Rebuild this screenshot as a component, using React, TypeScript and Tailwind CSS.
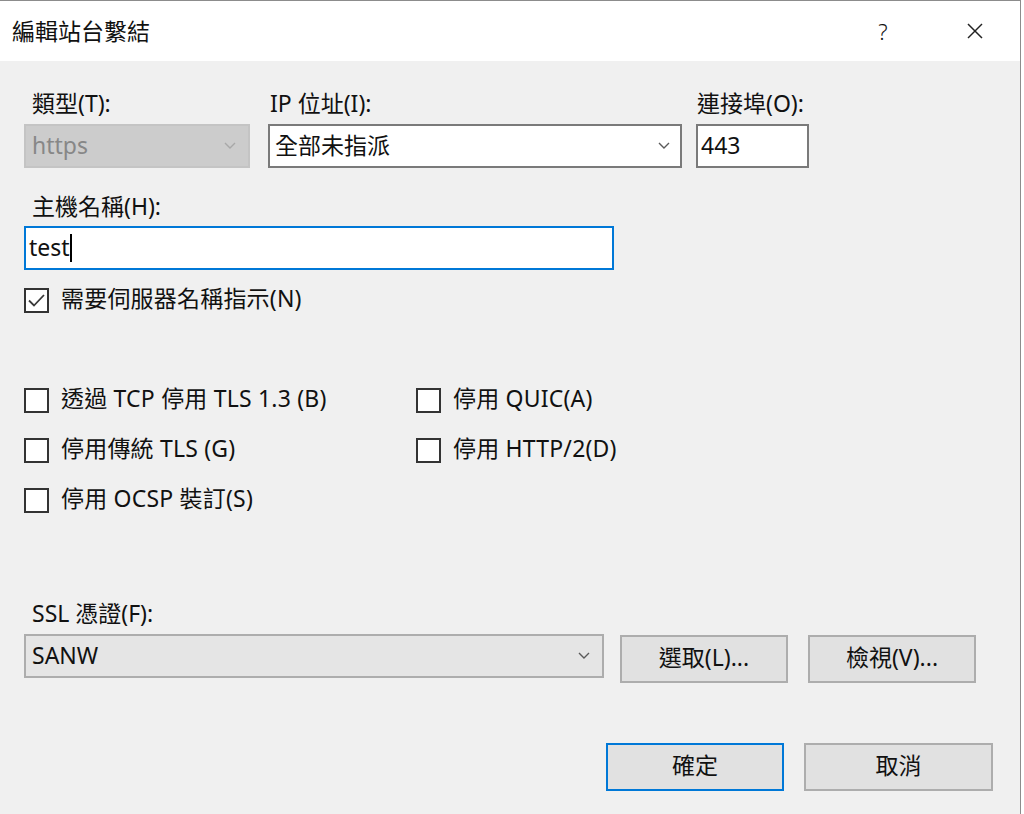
import React from 'react';

const font = "font-['Noto_Sans','Noto_Sans_CJK_TC',sans-serif]";

function Chevron({ color = '#5a5a5a' }: { color?: string }) {
  return (
    <svg width="12" height="7" viewBox="0 0 12 7" fill="none">
      <polyline points="1,1 6,6 11,1" stroke={color} strokeWidth="1.4" />
    </svg>
  );
}

function CheckBox({ label, checked = false }: { label: string; checked?: boolean }) {
  return (
    <div className="flex items-center h-[30px]">
      <div className="w-[25px] h-[25px] border-2 border-[#333] bg-white flex items-center justify-center shrink-0">
        {checked && (
          <svg width="17" height="13" viewBox="0 0 17 13" fill="none">
            <polyline points="1,6.5 6,11.5 16,1" stroke="#3a3a3a" strokeWidth="1.8" />
          </svg>
        )}
      </div>
      <span className="ml-[12px] pb-[3px] whitespace-nowrap tracking-[0.2px]">{label}</span>
    </div>
  );
}

function Button({ label, width, primary = false }: { label: string; width: string; primary?: boolean }) {
  return (
    <button
      className={`${width} h-[48px] flex items-center justify-center pb-[3px] bg-[#e1e1e1] border-2 ${primary ? 'border-[#0078d7]' : 'border-[#adadad]'} text-[#111]`}
    >
      {label}
    </button>
  );
}

export default function App() {
  return (
    <div className={`w-[1024px] h-[814px] bg-white text-[23px] text-[#111] ${font}`}>
      <div className="w-[1021px] h-[814px] border-t border-r border-[#8c8c8c] flex flex-col">
        {/* title bar */}
        <div className="h-[60px] bg-white flex items-center pl-3 shrink-0">
          <span className="text-[23px] leading-[30px]">編輯站台繫結</span>
          <div className="ml-auto flex items-center">
            <span className="text-[22px] font-light w-[12px] text-center">?</span>
            <div className="ml-[78px] mr-[37px]">
              <svg width="16" height="16" viewBox="0 0 16 16" fill="none">
                <line x1="1" y1="1" x2="15" y2="15" stroke="#222" strokeWidth="1.5" />
                <line x1="15" y1="1" x2="1" y2="15" stroke="#222" strokeWidth="1.5" />
              </svg>
            </div>
          </div>
        </div>

        {/* body */}
        <div className="flex-1 bg-[#f0f0f0] pl-6 pt-[27px] flex flex-col">
          <div className="flex">
            <div className="w-[226px]">
              <div className="ml-2 h-[30px] leading-[30px]">類型(T):</div>
              <div className="mt-[6px] h-[44px] bg-[#cccccc] border-2 border-[#c4c4c4] flex items-center pl-[6px] pr-3 pb-[2px] text-[#878787]">
                <span>https</span>
                <span className="ml-auto"><Chevron color="#a8a8a8" /></span>
              </div>
            </div>
            <div className="ml-[18px] w-[414px]">
              <div className="ml-[2px] h-[30px] leading-[30px]">IP 位址(I):</div>
              <div className="mt-[6px] h-[44px] bg-white border-2 border-[#7a7a7a] flex items-center pl-[5px] pr-[10px] pb-[2px]">
                <span>全部未指派</span>
                <span className="ml-auto"><Chevron /></span>
              </div>
            </div>
            <div className="ml-[14px] w-[113px]">
              <div className="ml-[1px] h-[30px] leading-[30px]">連接埠(O):</div>
              <div className="mt-[6px] h-[44px] bg-white border-2 border-[#7a7a7a] flex items-center pl-[3px] pb-[2px]">
                <span>443</span>
              </div>
            </div>
          </div>

          <div className="mt-[23px] ml-2 h-[30px] leading-[30px]">主機名稱(H):</div>
          <div className="mt-[5px] w-[590px] h-[44px] bg-white border-2 border-[#0078d7] flex items-center pl-[3px]">
            <span className="pb-[2px]">test</span>
            <span className="w-[2px] h-[28px] bg-black" />
          </div>

          <div className="mt-[15px]">
            <CheckBox label="需要伺服器名稱指示(N)" checked />
          </div>

          <div className="mt-[70px] flex">
            <div className="w-[392px] flex flex-col gap-[20px]">
              <CheckBox label="透過 TCP 停用 TLS 1.3 (B)" />
              <CheckBox label="停用傳統 TLS (G)" />
              <CheckBox label="停用 OCSP 裝訂(S)" />
            </div>
            <div className="flex flex-col gap-[20px]">
              <CheckBox label="停用 QUIC(A)" />
              <CheckBox label="停用 HTTP/2(D)" />
            </div>
          </div>

          <div className="mt-[83px] ml-2 h-[30px] leading-[30px]">SSL 憑證(F):</div>
          <div className="mt-[6px] flex items-start">
            <div className="w-[580px] h-[44px] bg-[#e5e5e5] border-2 border-[#adadad] flex items-center pl-[6px] pr-[12px] pb-[2px]">
              <span>SANW</span>
              <span className="ml-auto"><Chevron /></span>
            </div>
            <div className="ml-[16px] mt-[1px]">
              <Button label="選取(L)..." width="w-[168px]" />
            </div>
            <div className="ml-[20px] mt-[1px]">
              <Button label="檢視(V)..." width="w-[168px]" />
            </div>
          </div>

          <div className="mt-[60px] flex">
            <div className="ml-[582px]">
              <Button label="確定" width="w-[178px]" primary />
            </div>
            <div className="ml-[20px]">
              <Button label="取消" width="w-[189px]" />
            </div>
          </div>
        </div>
      </div>
    </div>
  );
}
